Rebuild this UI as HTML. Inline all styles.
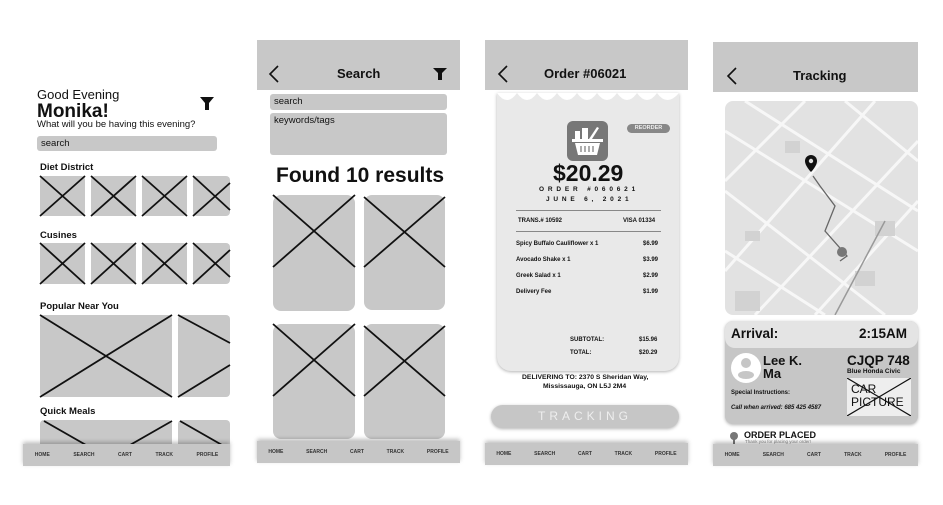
<!DOCTYPE html>
<html><head><style>
*{margin:0;padding:0;box-sizing:border-box}
body{width:943px;height:505px;background:#fff;position:relative;overflow:hidden;font-family:"Liberation Sans",sans-serif;color:#111}
.a{position:absolute}
.g{background:#c8c8c8}
.b{font-weight:bold}
.nav{position:absolute;height:22px;background:#c6c6c6;display:flex;justify-content:space-around;align-items:center;font-size:5px;font-weight:bold;color:#333;box-shadow:0 -2px 4px rgba(0,0,0,.25)}
.hdr{position:absolute;background:#c8c8c8;height:50px}
.t{position:absolute;white-space:nowrap;line-height:1}
</style></head><body>

<!-- Screen 1 -->
<div class="t" style="left:37px;top:88px;font-size:13px">Good Evening</div>
<div class="t b" style="left:37px;top:102px;font-size:19px">Monika!</div>
<div class="t" style="left:37px;top:120px;font-size:9.5px">What will you be having this evening?</div>
<svg class="a" style="left:200px;top:97px" width="14" height="13"><path d="M0 0H14L9 6V13H5V6Z" fill="#111"/></svg>
<div class="a g" style="left:37px;top:136px;width:180px;height:15px;border-radius:3px"></div>
<div class="t" style="left:41px;top:139px;font-size:9.5px">search</div>
<div class="t b" style="left:40px;top:163px;font-size:9.5px">Diet District</div>
<div class="t b" style="left:40px;top:231px;font-size:9.5px">Cusines</div>
<div class="t b" style="left:40px;top:302px;font-size:9.5px">Popular Near You</div>
<div class="t b" style="left:40px;top:407px;font-size:9.5px">Quick Meals</div>
<svg class="a" style="left:0;top:0" width="943" height="505">
<g fill="#c8c8c8">
<rect x="40" y="176" width="45" height="40" rx="4"/><rect x="91" y="176" width="45" height="40" rx="4"/><rect x="142" y="176" width="45" height="40" rx="4"/><rect x="193" y="176" width="37" height="40" rx="4"/>
<rect x="40" y="243" width="45" height="41" rx="4"/><rect x="91" y="243" width="45" height="41" rx="4"/><rect x="142" y="243" width="45" height="41" rx="4"/><rect x="193" y="243" width="37" height="41" rx="4"/>
<rect x="40" y="315" width="132" height="82" rx="4"/><rect x="178" y="315" width="52" height="82" rx="4"/>
<rect x="40" y="420" width="132" height="30" rx="4"/><rect x="178" y="420" width="52" height="30" rx="4"/>
<rect x="273" y="195" width="82" height="116" rx="8"/><rect x="364" y="195" width="81" height="115" rx="8"/>
<rect x="273" y="324" width="82" height="115" rx="8"/><rect x="364" y="324" width="81" height="115" rx="8"/>
</g>
<g stroke="#111" stroke-width="1.8" fill="none">
<path d="M40 176L85 216M85 176L40 216M91 176L136 216M136 176L91 216M142 176L187 216M187 176L142 216M193 216L230 183M193 176L230 210"/>
<path d="M40 243L85 284M85 243L40 284M91 243L136 284M136 243L91 284M142 243L187 284M187 243L142 284M193 284L230 250M193 243L230 277"/>
<path d="M40 315L172 397M172 315L40 397M178 315L230 343M178 397L230 365"/>
<path d="M44 421L86 445M172 421L130 445M180 421L222 445"/>
<path d="M273 195L355 267M355 195L273 267M364 197L445 267M445 197L364 267"/>
<path d="M273 324L355 396M355 324L273 396M364 326L445 396M445 326L364 396"/>
</g>
</svg>
<div class="nav" style="left:23px;top:444px;width:207px"><span>HOME</span><span>SEARCH</span><span>CART</span><span>TRACK</span><span>PROFILE</span></div>

<!-- Screen 2 -->
<div class="hdr" style="left:257px;top:40px;width:203px"></div>
<svg class="a" style="left:268px;top:65px" width="12" height="18"><path d="M10 1L2 9L10 17" stroke="#111" stroke-width="1.6" fill="none"/></svg>
<div class="t" style="left:337px;top:67px;font-size:13px;font-weight:600">Search</div>
<svg class="a" style="left:433px;top:68px" width="14" height="12"><path d="M0 0H14L9 5V12H5V5Z" fill="#111"/></svg>
<div class="a g" style="left:270px;top:94px;width:177px;height:16px;border-radius:3px"></div>
<div class="t" style="left:274px;top:97px;font-size:9.5px">search</div>
<div class="a g" style="left:270px;top:113px;width:177px;height:42px;border-radius:3px"></div>
<div class="t" style="left:274px;top:116px;font-size:9.5px">keywords/tags</div>
<div class="t b" style="left:276px;top:165px;font-size:21px">Found 10 results</div>
<div class="nav" style="left:257px;top:441px;width:203px"><span>HOME</span><span>SEARCH</span><span>CART</span><span>TRACK</span><span>PROFILE</span></div>

<!-- Screen 3 -->
<div class="hdr" style="left:485px;top:40px;width:203px"></div>
<svg class="a" style="left:497px;top:65px" width="12" height="18"><path d="M10 1L2 9L10 17" stroke="#111" stroke-width="1.6" fill="none"/></svg>
<div class="t" style="left:544px;top:67px;font-size:13px;font-weight:600">Order #06021</div>
<div class="a" style="left:497px;top:93px;width:182px;height:278px;background:#e9e9e9;border-radius:0 0 14px 14px;box-shadow:0 1px 3px rgba(0,0,0,.3)"></div>
<svg class="a" style="left:497px;top:93px" width="182" height="12"><path d="M0 0 Q10 14 20 0 Q30 14 40 0 Q50 14 60 0 Q70 14 80 0 Q90 14 100 0 Q110 14 120 0 Q130 14 140 0 Q150 14 160 0 Q170 14 182 0Z" fill="#fff"/></svg>
<div class="a" style="left:567px;top:121px;width:41px;height:40px;background:#777;border-radius:6px"></div>
<svg class="a" style="left:567px;top:121px" width="41" height="40"><g fill="#fff"><rect x="8" y="10" width="5" height="8"/><rect x="15" y="7" width="6" height="11"/><path d="M22 18L30 6L32 7L25 18Z"/><rect x="5" y="18" width="31" height="3"/><path d="M8 22H33L30 34H11Z"/></g><g stroke="#777" stroke-width="1.2"><path d="M14 25V31M18 25V31M22 25V31M26 25V31"/></g></svg>
<div class="a" style="left:627px;top:124px;width:43px;height:9px;background:#888;border-radius:5px;color:#eee;font-size:5.5px;font-weight:bold;text-align:center;line-height:9px">REORDER</div>
<div class="t b" style="left:553px;top:162px;font-size:23px">$20.29</div>
<div class="t b" style="left:539px;top:187px;font-size:6.5px;letter-spacing:3.8px">ORDER #060621</div>
<div class="t b" style="left:546px;top:197px;font-size:6.5px;letter-spacing:3.8px">JUNE 6, 2021</div>
<div class="a" style="left:516px;top:210px;width:145px;height:1px;background:#888"></div>
<div class="a" style="left:516px;top:231px;width:145px;height:1px;background:#888"></div>
<div class="t b" style="left:518px;top:218px;font-size:6px">TRANS.# 10592</div>
<div class="t b" style="left:623px;top:218px;font-size:6px">VISA 01334</div>
<div class="t b" style="left:516px;top:241px;font-size:6px">Spicy Buffalo Cauliflower x 1</div><div class="t b" style="left:643px;top:241px;font-size:6px">$6.99</div>
<div class="t b" style="left:516px;top:257px;font-size:6px">Avocado Shake x 1</div><div class="t b" style="left:643px;top:257px;font-size:6px">$3.99</div>
<div class="t b" style="left:516px;top:273px;font-size:6px">Greek Salad x 1</div><div class="t b" style="left:643px;top:273px;font-size:6px">$2.99</div>
<div class="t b" style="left:516px;top:289px;font-size:6px">Delivery Fee</div><div class="t b" style="left:643px;top:289px;font-size:6px">$1.99</div>
<div class="t b" style="left:570px;top:337px;font-size:6px">SUBTOTAL:</div><div class="t b" style="left:639px;top:337px;font-size:6px">$15.96</div>
<div class="t b" style="left:570px;top:350px;font-size:6px">TOTAL:</div><div class="t b" style="left:639px;top:350px;font-size:6px">$20.29</div>
<div class="t b" style="left:522px;top:375px;font-size:6.8px">DELIVERING TO:  2370 S Sheridan Way,</div>
<div class="t b" style="left:543px;top:384px;font-size:6.8px">Mississauga, ON L5J 2M4</div>
<div class="a" style="left:491px;top:405px;width:188px;height:23px;background:#c6c6c6;border-radius:12px;box-shadow:0 1px 3px rgba(0,0,0,.3);color:#eee;font-size:12px;letter-spacing:4px;text-align:center;line-height:23px">TRACKING</div>
<div class="nav" style="left:485px;top:443px;width:203px"><span>HOME</span><span>SEARCH</span><span>CART</span><span>TRACK</span><span>PROFILE</span></div>

<!-- Screen 4 -->
<div class="hdr" style="left:713px;top:42px;width:205px"></div>
<svg class="a" style="left:726px;top:67px" width="12" height="18"><path d="M10 1L2 9L10 17" stroke="#111" stroke-width="1.6" fill="none"/></svg>
<div class="t b" style="left:793px;top:69px;font-size:13px">Tracking</div>
<svg class="a" style="left:725px;top:101px" width="193" height="214">
<rect width="193" height="214" rx="8" fill="#e2e2e2"/>
<g stroke="#f7f7f7" stroke-width="3" fill="none">
<path d="M0 30L193 150M0 90L160 214M20 0L193 110M0 150L100 214M80 0L0 80M150 0L0 170M193 40L30 214M193 100L90 214M120 0L193 60"/>
</g>
<g fill="#d2d2d2"><rect x="20" y="130" width="15" height="10"/><rect x="150" y="120" width="20" height="15"/><rect x="60" y="40" width="15" height="12"/><rect x="130" y="170" width="20" height="15"/><rect x="10" y="190" width="25" height="20"/></g>
<path d="M160 120L110 214" stroke="#999" stroke-width="1.5"/>
<path d="M88 75L95 85L110 105L100 130L122 155L115 160" stroke="#666" stroke-width="1.3" fill="none"/>
<path d="M80 60a6 6 0 0 1 12 0c0 5-6 11-6 11s-6-6-6-11z" fill="#111"/><circle cx="86" cy="60" r="2.2" fill="#e2e2e2"/>
<circle cx="117" cy="151" r="5" fill="#777"/>
</svg>
<div class="a" style="left:725px;top:321px;width:193px;height:103px;background:#c6c6c6;border-radius:8px;box-shadow:0 1px 3px rgba(0,0,0,.3)"></div>
<div class="a" style="left:725px;top:321px;width:193px;height:27px;background:#e4e4e4;border-radius:8px 8px 10px 10px"></div>
<div class="t b" style="left:731px;top:327px;font-size:13.5px">Arrival:</div>
<div class="t b" style="left:859px;top:327px;font-size:13.5px">2:15AM</div>
<svg class="a" style="left:730px;top:352px" width="32" height="32"><circle cx="16" cy="16" r="15" fill="#fff"/><circle cx="16" cy="11" r="5" fill="#c6c6c6"/><ellipse cx="16" cy="23" rx="8" ry="4" fill="#c6c6c6"/></svg>
<div class="t b" style="left:763px;top:354px;font-size:13px;line-height:13px">Lee K.<br>Ma</div>
<div class="t b" style="left:731px;top:390px;font-size:6px">Special Instructions:</div>
<div class="t b" style="left:731px;top:405px;font-size:6px;font-style:italic">Call when arrived: 685 425 4587</div>
<div class="t b" style="left:847px;top:354px;font-size:13.5px">CJQP 748</div>
<div class="t b" style="left:847px;top:369px;font-size:6.5px">Blue Honda Civic</div>
<div class="a" style="left:847px;top:378px;width:64px;height:38px;background:#eee"></div>
<div class="t" style="left:851px;top:383px;font-size:12px;line-height:13px">CAR<br>PICTURE</div>
<svg class="a" style="left:847px;top:378px" width="64" height="38"><path d="M0 0L64 38M64 0L0 38" stroke="#111" stroke-width="1.2"/></svg>
<svg class="a" style="left:730px;top:431px" width="8" height="16"><circle cx="4" cy="5" r="4" fill="#777"/><rect x="3" y="8" width="2" height="8" fill="#777"/></svg>
<div class="t b" style="left:744px;top:431px;font-size:9px">ORDER PLACED</div>
<div class="t" style="left:745px;top:440px;font-size:4.5px;color:#888">Thank you for placing your order!</div>
<div class="nav" style="left:713px;top:444px;width:205px"><span>HOME</span><span>SEARCH</span><span>CART</span><span>TRACK</span><span>PROFILE</span></div>
</body></html>
